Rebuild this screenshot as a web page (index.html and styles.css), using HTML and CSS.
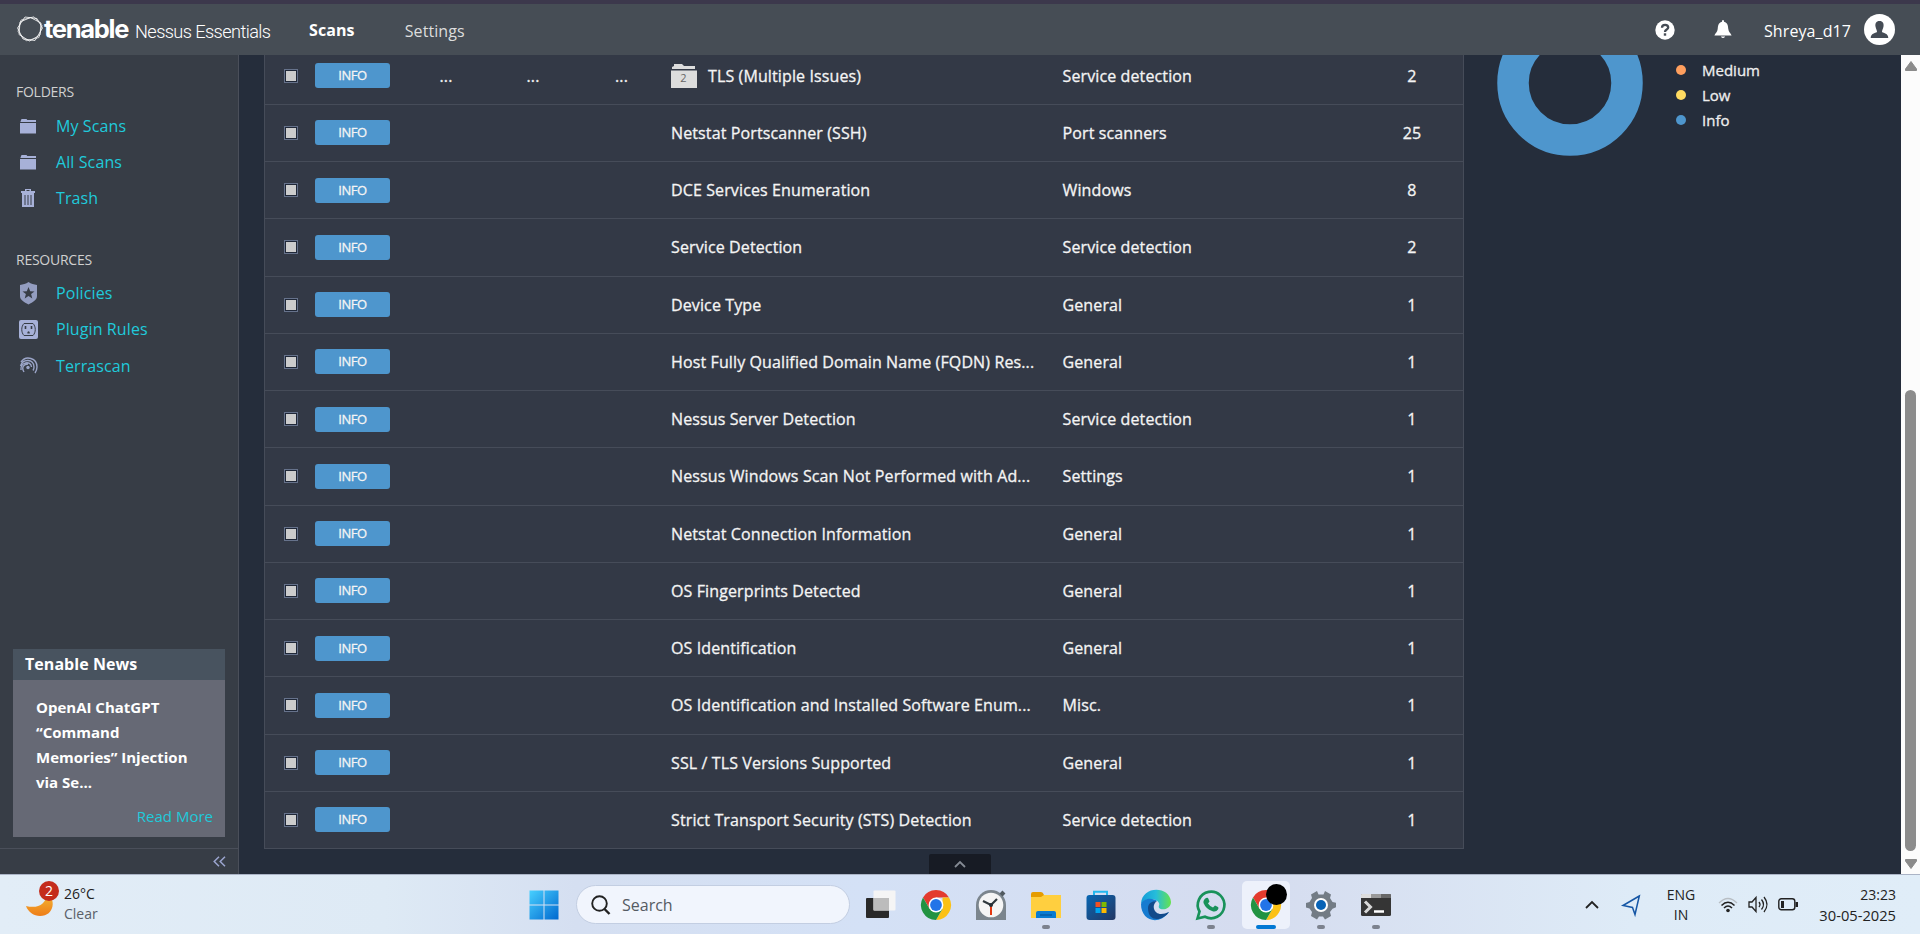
FILE: index.html
```html
<!DOCTYPE html>
<html lang="en"><head><meta charset="utf-8"><title>Nessus Essentials</title><link rel="stylesheet" href="styles.css"></head>
<body>
<div class="screen">
<header class="topbar">
  <svg class="mark" viewBox="0 0 26 26"><g fill="none" stroke="#fff" stroke-width=".8"><path d="M8 1 20 2.500 25.500 12 18 24.500 6 23 .5 12Z"/><path d="M13.500 1.500 24 7 23 19 12.500 25 2 18.500 3 6Z"/><path d="M4 4 17 .8 25 9.500 22 21.500 9 24.800 1 15.500Z" opacity=".8"/></g></svg>
  <span class="brand">tenable</span><span class="product">Nessus Essentials</span>
  <nav class="nav"><a class="nav-link active">Scans</a><a class="nav-link">Settings</a></nav>
  <div class="account">
    <svg class="help" viewBox="0 0 20 20"><circle cx="10" cy="10" r="9.7" fill="#fff"/><path d="M7 7.7C7 3.8 13.2 4 13.2 7.5 13.2 9.7 10 9.4 10 12" fill="none" stroke="#454c55" stroke-width="2.3"/><rect x="8.8" y="13.3" width="2.4" height="2.4" fill="#454c55"/></svg>
    <svg class="bell" viewBox="0 0 18 19"><path d="M9 0C10 0 10 1 10 1.7 14 2.7 14 6 14.3 9 14.6 12 16.5 13 17.6 15.5H.4C1.5 13 3.4 12 3.7 9 4 6 4 2.7 8 1.7 8 1 8 0 9 0ZM6.8 16.5h4.4Q9 19.5 6.8 16.5Z" fill="#fff"/></svg>
    <span class="user">Shreya_d17</span>
    <svg class="avatar" viewBox="0 0 31 31"><circle cx="15.5" cy="15.5" r="15.5" fill="#fff"/><path d="M15.5 7C19 7 20 9.500 19.500 12.500 19 15 18 16 18 18 20 19.500 24 19 24.300 24H6.700C7 19 11 19.500 13 18 13 16 12 15 11.500 12.500 11 9.500 12 7 15.500 7Z" fill="#454c55"/></svg>
  </div>
</header>
<div class="workspace">
  <aside class="sidebar">
    <div class="menu">
      <h2 class="menu-title">FOLDERS</h2>
      <a class="menu-item"><svg class="menu-icon" viewBox="0 0 20 24"><path d="M1.500 6.500 2.500 4h5l.8 1H17v2H1.500ZM1 8h16v10.500H1Z" fill="#a7b1d8"/></svg>My Scans</a>
      <a class="menu-item"><svg class="menu-icon" viewBox="0 0 20 24"><path d="M1.500 6.500 2.500 4h5l.8 1H17v2H1.500ZM1 8h16v10.500H1Z" fill="#a7b1d8"/></svg>All Scans</a>
      <a class="menu-item"><svg class="menu-icon" viewBox="0 0 20 24"><path d="M6 4V2h6v2h4v2H2V4h4ZM3 6h12v14H3Z" fill="#a7b1d8"/><path d="M7.500 3.500h3M6 8v10M9 8v10M12 8v10" stroke="#373d46"/></svg>Trash</a>
      <h2 class="menu-title resources">RESOURCES</h2>
      <a class="menu-item"><svg class="menu-icon" viewBox="0 0 20 24"><path d="M9.500 0C12 2 15 2.500 18 3v11c0 4-4 6-8.500 8.500C5 20 1 18 1 14V3c3-.5 6-1 8.500-3Z" fill="#939dc0"/><path d="m9.500 5 1.700 4.200 4.300.2-3.400 2.700 1.200 4.300-3.800-2.500-3.800 2.500 1.200-4.300-3.400-2.700 4.300-.2Z" fill="#373d46"/></svg>Policies</a>
      <a class="menu-item"><svg class="menu-icon" viewBox="0 0 20 24"><rect y="2" width="19" height="19" rx="2" fill="#a7b1d8"/><path d="M5 5.500h9c3 3 3 9 0 12H5c-3-3-3-9 0-12Z" fill="none" stroke="#373d46"/><path d="M6.500 8v3M12.500 8v3" stroke="#373d46" stroke-width="1.600"/><path d="M8.300 15.500c0-3 2.500-3 2.500 0Z" fill="#373d46"/></svg>Plugin Rules</a>
      <a class="menu-item terrascan"><svg class="menu-icon" viewBox="0 0 20 24"><g fill="none" stroke="#9ba5c8" stroke-width="1.400"><path d="M2 7C7 0 18 3 18 12q0 3-2 6M1.500 11C4 3 15 4 15 12q0 2-1 3.500M2 15c-1-8 10-10 10.500-3M5 17c-3-5 0-8 4-8"/></g><circle cx="9" cy="12.500" r="1.700" fill="#9ba5c8"/></svg>Terrascan</a>
    </div>
    <section class="news"><h3 class="news-title">Tenable News</h3><div class="news-body"><p class="headline">OpenAI ChatGPT “Command Memories” Injection via Se...</p><a class="more">Read More</a></div></section>
    <div class="collapse"><svg class="collapse-icon" viewBox="0 0 13 11"><path d="M6 .7 1.200 5.500 6 10.300M12 .7 7.200 5.500 12 10.300" fill="none" stroke="#9ba5cf" stroke-width="1.500"/></svg></div>
  </aside>
  <main class="content">
    <div class="table" id="table"></div>
    <div class="summary">
      <svg class="donut" viewBox="0 0 146 146"><circle cx="73" cy="73" r="57" fill="none" stroke="#4e96cd" stroke-width="31.500"/></svg>
      <ul class="legend"><li class="key"><i class="dot medium"></i>Medium</li><li class="key"><i class="dot low"></i>Low</li><li class="key"><i class="dot info"></i>Info</li></ul>
    </div>
    <div class="drawer"><svg class="drawer-icon" viewBox="0 0 12 8"><path d="m1 7 5-5 5 5" fill="none" stroke="#858b94" stroke-width="1.800"/></svg></div>
  </main>
  <div class="scrollbar"><svg class="arrow" viewBox="0 0 12 10"><path d="M6 .5 11.500 8v1.500H.5V8Z" fill="#8b8b8b" stroke="#8b8b8b" stroke-linejoin="round"/></svg><div class="thumb"></div><svg class="arrow" viewBox="0 0 12 10"><path d="M6 9.500 11.500 2V.5H.5V2Z" fill="#8b8b8b" stroke="#8b8b8b" stroke-linejoin="round"/></svg></div>
</div>
<footer class="taskbar">
  <div class="weather"><svg class="moon" viewBox="0 0 34 38"><defs><linearGradient id="moon" x2="0" y2="1"><stop stop-color="#f3b735"/><stop offset="1" stop-color="#ee7d18"/></linearGradient></defs><path d="M0 25C12 28 20 23 21 13 30 17 29 35 14 35 8 35 2 31 0 25Z" fill="url(#moon)"/><circle cx="23" cy="10" r="10" fill="#c42b1c"/><text x="23" y="15" class="badge-text">2</text></svg><div class="conditions"><span>26°C</span><span class="sky">Clear</span></div></div>
  <div class="apps">
    <div class="app start"><svg class="app-icon" viewBox="0 0 30 30"><defs><linearGradient id="win" x2="1" y2="1"><stop stop-color="#48d0ff"/><stop offset="1" stop-color="#0068cf"/></linearGradient></defs><path d="M.5.5h14v14H.5ZM15.500.5h14v14h-14ZM.5 15.500h14v14H.5ZM15.500 15.500h14v14h-14Z" fill="url(#win)"/></svg></div>
    <div class="search"><svg class="search-icon" viewBox="0 0 20 20"><circle cx="8.500" cy="8.500" r="7.300" fill="none" stroke="#222" stroke-width="1.900"/><path d="m13.500 14 5 5" stroke="#222" stroke-width="2.400"/></svg>Search</div>
    <div class="app"><svg class="app-icon" viewBox="0 0 30 30"><rect y="8" width="23" height="20" rx="1" fill="#292929"/><rect x="7.500" y=".5" width="22" height="20" rx="1" fill="#f5f5f5"/><path d="M7.500 8H23v12.500H7.500Z" fill="#bcbcbc"/></svg></div>
    <div class="app"><svg class="app-icon" viewBox="0 0 30 30"><g id="chrome"><path d="M2 7.500A15 15 0 0 1 28 7.500H15l-6.500 11Z" fill="#e33b2e"/><path d="M28 7.500A15 15 0 0 1 15 30l6.500-11.200L21.500 7.500Z" fill="#fbc116"/><path d="M2 7.500A15 15 0 0 0 15 30l6.500-11.200H8.500Z" fill="#229342"/><circle cx="15" cy="15" r="7.400" fill="#fff"/><circle cx="15" cy="15" r="5.900" fill="#2374e8"/></g></svg></div>
    <div class="app"><svg class="app-icon" viewBox="0 0 30 30"><path d="M0 30V15a15 15 0 0 1 30 0v15Z" fill="#7b858d"/><path d="m25 2 3 3" stroke="#515a61" stroke-width="4"/><circle cx="15" cy="15" r="12.300" fill="#f5f5f5"/><path d="m7 11 8 4 6-6" fill="none" stroke="#30383d" stroke-width="2.200"/><path d="M15 15v10" stroke="#e33710" stroke-width="2"/><circle cx="15" cy="15" r="2" fill="#263036"/></svg></div>
    <div class="app running"><svg class="app-icon" viewBox="0 0 30 30"><path d="M0 4q0-2 2-2h8q2 0 3 3h16q1 0 1 1v4H0Z" fill="#e59c00"/><path d="M0 7h10l3-2h17v23H0Z" fill="#ffcf3f"/><path d="M5 28v-5q0-2 2-2h16q2 0 2 2v5Z" fill="#087bd2"/><path d="M9 25h12" stroke="#055ba4" stroke-width="1.500"/></svg></div>
    <div class="app"><svg class="app-icon" viewBox="0 0 30 30"><defs><linearGradient id="store" x2="1" y2="1"><stop stop-color="#0867b4"/><stop offset="1" stop-color="#243763"/></linearGradient></defs><path d="M8 5V1.800h13V5" fill="none" stroke="#23b8ef" stroke-width="2"/><rect x=".5" y="5" width="29" height="25" rx="3" fill="url(#store)"/><path d="M9.500 12h5v5h-5Z" fill="#f25022"/><path d="M15.500 12h5v5h-5Z" fill="#7fba00"/><path d="M9.500 18h5v5h-5Z" fill="#00a4ef"/><path d="M15.500 18h5v5h-5Z" fill="#ffb900"/></svg></div>
    <div class="app"><svg class="app-icon" viewBox="0 0 30 30"><defs><linearGradient id="edge" x2="1"><stop stop-color="#149bd8"/><stop offset=".5" stop-color="#26bddb"/><stop offset="1" stop-color="#65e34d"/></linearGradient></defs><path d="M0 14C1-5 29-4 30 12c0 7-9 9-12 6-1-2 1-3 0-5C15 7 4 8 0 14Z" fill="url(#edge)"/><path d="M0 14C3 7 13 8 16 11c-4 0-6 4-5 8 2 6 10 8 17 3C18 36 0 31 0 14Z" fill="#167bd0"/><path d="M7 18c0-4 3-7 9-7-6 4-3 13 4 13 3 0 5-1 8-2-6 9-21 11-21-4Z" fill="#114a8b"/></svg></div>
    <div class="app running"><svg class="app-icon" viewBox="0 0 30 30"><path d="m1.500 28.500 2-7A13.300 13.300 0 1 1 9 26.800Z" fill="none" stroke="#19925a" stroke-width="2.700"/><path d="M10 8q2-1 2.500 1l1 2.500-1.500 2q2 3 5 4l2-2 3 1.500q1 .5 0 2.500-2 3-6 1.500-6-2-8.500-8Q7 10 10 8Z" fill="#19925a"/></svg></div>
    <div class="app current"><svg class="app-icon" viewBox="0 0 30 30"><use href="#chrome"/></svg><i class="profile"></i></div>
    <div class="app running"><svg class="app-icon" viewBox="0 0 30 30"><path d="m11 1 1.500 3.500h5L19 1l6 3.500-1 3.500 2.500 4 3.500.8v4.500l-3.500 1.500L24 22l1 4-6 3.500-2-3h-4l-2 3L5 26l1-4-2.500-3.500L0 17.500V13l3.500-1L6 8 5 4.500Z" fill="#737c85"/><circle cx="15" cy="15" r="7" fill="#fff"/><circle cx="15" cy="15" r="5" fill="#0863b6"/></svg></div>
    <div class="app running"><svg class="app-icon" viewBox="0 0 30 30"><rect y="4" width="30" height="22" rx="1.500" fill="#353535"/><path d="M0 8V5q0-1 1-1h9v4Z" fill="#ddd"/><path d="M10 4h10v4H10Z" fill="#999"/><path d="M20 4h9q1 0 1 1v3H20Z" fill="#686868"/><path d="m4 11.500 5.500 5.500L4 22.500" fill="none" stroke="#d8d8d8" stroke-width="3"/><path d="M13 21.500h10" stroke="#fff" stroke-width="2.500"/></svg></div>
  </div>
  <div class="tray">
    <svg class="chevron" viewBox="0 0 14 9"><path d="m1 8 6-6 6 6" fill="none" stroke="#222" stroke-width="1.800"/></svg>
    <svg class="location" viewBox="0 0 19 20"><path d="M17.300 1 1 10.500l9.500 2 2.500 7Z" fill="none" stroke="#1556a5" stroke-width="1.500"/></svg>
    <div class="language"><span>ENG</span><span>IN</span></div>
    <svg class="wifi" viewBox="0 0 20 16"><path d="M1 6Q10-3 19 6" fill="none" stroke="#b8bec4" stroke-width="1.300"/><path d="M3.500 8.500Q10 2 16.500 8.500M6 11Q10 7 14 11" fill="none" stroke="#222" stroke-width="1.500"/><circle cx="10" cy="13.500" r="1.800" fill="#222"/></svg>
    <svg class="volume" viewBox="0 0 20 17"><path d="M1 6h3l4-4.500v14L4 11H1Z" fill="none" stroke="#222" stroke-width="1.300"/><path d="M11 6q2 2.500 0 5M13.500 3.500q4 5 0 10M16 1q6 7.500 0 15" fill="none" stroke="#222" stroke-width="1.300"/></svg>
    <svg class="battery" viewBox="0 0 20 13"><rect x=".8" y=".8" width="16" height="11" rx="2.500" fill="none" stroke="#222" stroke-width="1.400"/><path d="M3 3h3v7H3ZM17.500 4H20v5h-2.500Z" fill="#222"/></svg>
    <div class="clock"><span>23:23</span><span class="date">30-05-2025</span></div>
  </div>
</footer>
</div>
<script src="table.js"></script>
</body></html>
```

FILE: styles.css
```css
*{box-sizing:border-box}
body{margin:0;font-family:"Open Sans","Noto Sans",sans-serif;overflow:hidden}
svg{display:block;flex:none;overflow:visible}
.screen{width:1920px;height:934px;display:flex;flex-direction:column;overflow:hidden}
.topbar{height:55px;flex:none;background:#464d55;border-top:4px solid #3c384c;display:flex;align-items:center;color:#fff;padding-left:17px}
.mark{width:26px;height:26px;margin-bottom:2px}
.brand{font:700 25.500px/34px Inter,sans-serif;letter-spacing:-1.3px;width:92px;padding-left:1px;margin-bottom:1px}
.product{font:300 18.200px/34px Roboto,sans-serif;width:174px;white-space:nowrap;letter-spacing:-.6px;padding-top:5px}
.nav{display:flex;gap:50px;font-size:16px;line-height:30px;padding-top:1px}
.nav-link{color:#ddd;letter-spacing:.1px}.nav-link.active{font-weight:700;color:#fff}
.nav-link:last-child{padding-top:1px}
.account{margin-left:auto;margin-right:25px;display:flex;align-items:center}
.help{width:20px;height:20px;margin-right:39px}.bell{width:18px;height:19px;margin-right:32px}
.user{font-size:16px;width:100px;white-space:nowrap;padding-top:2px;letter-spacing:.1px}.avatar{width:31px;height:31px}
.workspace{height:819px;flex:none;display:flex;background:#252d3b}
.sidebar{width:239px;flex:none;background:#373d46;border-right:1px solid #4a4f5a;display:flex;flex-direction:column}
.menu{padding:25px 16px 0}.menu-title{font-size:14px;line-height:24px;letter-spacing:-.25px;font-weight:400;margin:0 0 4px;color:#d0d0d0}
.menu-title.resources{margin-top:32px;margin-bottom:3px}
.menu-item{height:36px;display:flex;align-items:center;color:#20cadb;font-size:16px;letter-spacing:.1px}.terrascan{margin-top:1px}
.menu-icon{width:20px;height:24px;margin:1px 17px 0 3px}
.news{margin:auto 13px 11px;background:#666975;height:188px;flex:none}
.news-title{margin:0;background:#48535f;color:#fff;font-size:16px;line-height:31px;padding-left:12px;letter-spacing:.05px}
.news-body{padding:15px 12px 0 23px;display:flex;flex-direction:column}
.headline{margin:0;font-size:15px;font-weight:700;line-height:25px;color:#fff;width:158px}
.more{color:#20cadb;font-size:15px;align-self:flex-end;line-height:24px;margin-top:9px}
.collapse{height:26px;flex:none;border-top:1px solid #4a4f5a;display:flex;align-items:center;justify-content:flex-end;padding-right:12px}.collapse-icon{width:13px;height:11px}
.content{flex:1;display:flex;padding-left:25px;position:relative;overflow:hidden}
.table{width:1200px;height:794px;overflow:hidden;border:solid #464c59;border-width:0 1px;background:#333946;display:flex;flex-direction:column;justify-content:flex-end}
.row{height:57.250px;flex:none;border-bottom:1px solid #464c59;display:grid;grid-template-columns:50px 88px 86px 88px 94px 391.500px 300px 99px 1fr;align-items:center;color:#f4f4f4;font-size:16px;letter-spacing:.12px;-webkit-text-stroke:.3px}
.check{width:14px;height:14px;margin-left:19px;border:1px solid #66728b;background:#ccc;box-shadow:inset 0 0 0 1px #202838}
.severity{width:75px;height:25px;background:#4e96cd;border-radius:3px;font-size:13px;line-height:25px;text-align:center;letter-spacing:-.4px}
.dots{text-align:center}.dots-last{padding-right:5px}.name{display:flex;align-items:center;gap:11px;white-space:nowrap}.count{text-align:center}
.group{width:26px;height:24px}.group-text{font-size:11px;text-anchor:middle;fill:#666;-webkit-text-stroke:0}
.summary{display:flex;padding-left:33px;margin-top:-45px;height:146px}
.donut{width:146px;height:146px}
.legend{list-style:none;margin:47px 0 0;padding:0 0 0 33px;color:#eee;font-size:15px;-webkit-text-stroke:.3px}
.key{display:flex;align-items:center;height:25px}.dot{width:10px;height:10px;border-radius:50%;margin:1px 16px 0 0}.dot.medium{background:#ff9f5e}.dot.low{background:#ffdb61}.dot.info{background:#4e96cd}
.drawer{position:absolute;left:690px;bottom:0;width:62px;height:20px;background:#171b24;display:flex;align-items:center;justify-content:center;border-radius:2px 2px 0 0}.drawer-icon{width:12px;height:8px}
.scrollbar{width:19px;flex:none;background:#fcfcfc;display:flex;flex-direction:column;align-items:center;padding:6px 0 5px}.arrow{width:12px;height:10px}.thumb{width:11px;height:461px;border-radius:6px;background:#8b8b8b;margin-top:auto;margin-bottom:8px}
.taskbar{height:60px;flex:none;border-top:1px solid #abb4c6;background:linear-gradient(90deg,#e2edf7,#deeaf5 20%,#d5dff1 30%,#d4e1f6 45%,#d5dcef 65%,#deebf7 85%,#e0edf8);display:flex;color:#222}
.weather{display:flex;width:520px;padding-left:26px}.moon{width:34px;height:38px;margin-top:6px}.badge-text{font-size:14px;fill:#fff;text-anchor:middle}
.conditions{display:flex;flex-direction:column;font-size:14px;line-height:20px;margin:9px 0 0 4px}.sky{color:#5a6068}
.apps{display:flex;align-items:center}.app{width:48px;height:48px;margin-right:7px;flex:none;display:flex;align-items:center;justify-content:center;position:relative;border-radius:5px}.app.start{margin-right:8px}.app-icon{width:30px;height:30px}
.search{width:274px;height:39px;border-radius:20px;background:#f1f5fd;border:1px solid #c3cee2;display:flex;align-items:center;padding-left:14px;font-size:16px;color:#555b63;margin-right:7px}.search-icon{width:20px;height:20px;margin-right:11px}
.running:after,.current:after{content:"";position:absolute;width:8px;height:4px;border-radius:2px;bottom:0;left:20px;background:#7c828e}.current{background:#edf1fb}.current:after{width:20px;left:14px;background:#0078d4}.profile{position:absolute;width:21px;height:21px;border-radius:50%;background:#000;left:24px;top:3px}
.tray{margin-left:auto;padding-right:24px;display:flex;align-items:center;font-size:14px;line-height:20px}.chevron{width:14px;height:9px;margin-right:23px}.location{width:19px;height:20px;margin-right:25px}.language{width:30px;display:flex;flex-direction:column;align-items:center;margin-right:22px}.wifi{width:20px;height:16px;margin-right:10px}.volume{width:20px;height:17px;margin-right:10px}.battery{width:20px;height:13px;margin-right:19px}.clock{display:flex;flex-direction:column;width:79px;align-items:flex-end}.date{font-size:14.700px;white-space:nowrap}
```

FILE: table.js
```js
const findings = [
  ["TLS (Multiple Issues)", "Service detection", 2, true],
  ["Netstat Portscanner (SSH)", "Port scanners", 25],
  ["DCE Services Enumeration", "Windows", 8],
  ["Service Detection", "Service detection", 2],
  ["Device Type", "General", 1],
  ["Host Fully Qualified Domain Name (FQDN) Res...", "General", 1],
  ["Nessus Server Detection", "Service detection", 1],
  ["Nessus Windows Scan Not Performed with Ad...", "Settings", 1],
  ["Netstat Connection Information", "General", 1],
  ["OS Fingerprints Detected", "General", 1],
  ["OS Identification", "General", 1],
  ["OS Identification and Installed Software Enum...", "Misc.", 1],
  ["SSL / TLS Versions Supported", "General", 1],
  ["Strict Transport Security (STS) Detection", "Service detection", 1]
];
const group = '<svg class="group" viewBox="0 0 26 24"><path d="M1 5V3l2-1V0h8l2 2h11v3ZM0 6.500h26V24H0Z" fill="#ddd"/><text x="12.500" y="18" class="group-text">2</text></svg>';
document.getElementById("table").innerHTML = findings.map(([name, family, count, grouped]) => {
  const dots = grouped ? "..." : "";
  return `<div class="row"><i class="check"></i><span class="severity">INFO</span><span class="dots">${dots}</span><span class="dots">${dots}</span><span class="dots dots-last">${dots}</span><span class="name">${grouped ? group : ""}${name}</span><span>${family}</span><span class="count">${count}</span></div>`;
}).join("");
```
